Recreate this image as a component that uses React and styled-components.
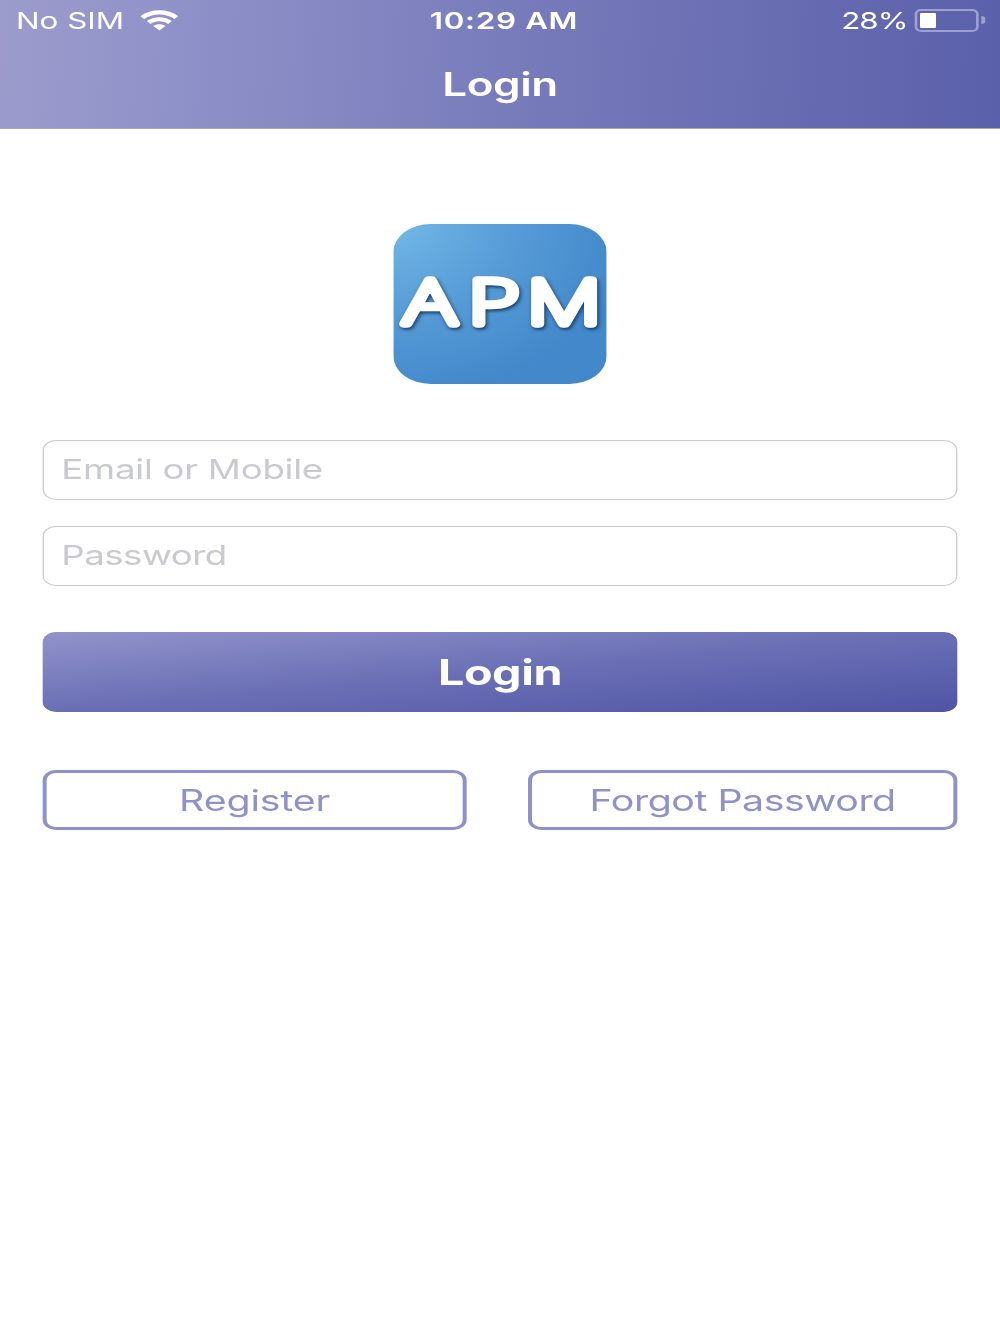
import React from "react"
import styled, { createGlobalStyle } from "styled-components"

const App = () => (
  <>
    <GlobalStyle />
    <Screen>
      <Header>
        <StatusBar>
          <Carrier>
            <StatusText>No SIM</StatusText>
            <WifiIcon viewBox="0 0 29 21">
              <path d="M0.3 6.2 C8 -1.6 21 -1.6 28.7 6.2 L25.9 9 C19.6 2.9 9.4 2.9 3.1 9 Z" />
              <path d="M5.1 11.1 C10.2 6 18.8 6 23.9 11.1 L21.1 13.9 C17.4 10.4 11.6 10.4 7.9 13.9 Z" />
              <path d="M9.9 16 C12.5 13.7 16.5 13.7 19.1 16 L14.5 20.6 Z" />
            </WifiIcon>
          </Carrier>
          <Time>10:29 AM</Time>
          <Power>
            <StatusText $spacing="-0.8px">28%</StatusText>
            <Battery>
              <BatteryLevel />
            </Battery>
            <BatteryTip />
          </Power>
        </StatusBar>
        <Title>Login</Title>
      </Header>

      <Form onSubmit={e => e.preventDefault()}>
        <Logo viewBox="0 0 160 160">
          <defs>
            <radialGradient id="sky" cx="0" cy="0" r="1.1">
              <stop offset="0" stopColor="#72b8e6" />
              <stop offset="0.5" stopColor="#579cd7" />
              <stop offset="1" stopColor="#4288ca" />
            </radialGradient>
          </defs>
          <rect width="160" height="160" rx="28" fill="url(#sky)" />
          <LogoText x="8 53.4 94.9" y="100.2" transform="scale(1.06 1)">APM</LogoText>
        </Logo>
        <Input type="text" placeholder="Email or Mobile" $spacing="-0.2px" />
        <Input type="password" placeholder="Password" $spacing="-0.4px" />
        <LoginButton>Login</LoginButton>
        <Links>
          <LinkButton type="button" $width="318px">Register</LinkButton>
          <LinkButton type="button" $width="322px" $spacing="-0.35px">Forgot Password</LinkButton>
        </Links>
      </Form>
    </Screen>
  </>
)

export default App

const GlobalStyle = createGlobalStyle`
  * {
    box-sizing: border-box;
  }
  body {
    margin: 0;
    background: #fff;
    overflow: hidden;
    font-family: Inter, "Liberation Sans", sans-serif;
  }
`

// 750px wide layout, stretched to fill the 4:3 window
const Screen = styled.div`
  width: 750px;
  height: 1334px;
  transform: scaleX(1.33333);
  transform-origin: 0 0;
  background: #fff;
`

const Header = styled.header`
  height: 129px;
  border-bottom: 1px solid #aaaab4;
  background: linear-gradient(92deg, #9c9bcc 0%, #8e91c8 19%, #7477b8 58%, #5a60aa 100%);
  color: #fff;
`

const StatusBar = styled.div`
  display: grid;
  grid-template-columns: 1fr auto 1fr;
  align-items: center;
  height: 40px;
  padding: 0 11px 0 12px;
`

const Carrier = styled.div`
  display: flex;
  align-items: center;
  gap: 12px;
`

const Power = styled.div`
  display: flex;
  align-items: center;
  justify-content: flex-end;
`

const StatusText = styled.span`
  padding-top: 2px;
  font-size: 23.5px;
  letter-spacing: ${props => props.$spacing || "0"};
  line-height: 38px;
  white-space: nowrap;
`

const Time = styled(StatusText)`
  padding-left: 5px;
  font-weight: 600;
  letter-spacing: 0.5px;
`

const WifiIcon = styled.svg`
  width: 29px;
  height: 21px;
  margin-left: -0.5px;
  fill: #fff;
`

const Battery = styled.div`
  width: 48px;
  height: 23px;
  margin-left: 5.5px;
  padding: 2px;
  border: 2px solid rgba(255, 255, 255, 0.4);
  border-radius: 5px;
`

const BatteryLevel = styled.div`
  width: 12px;
  height: 15px;
  border-radius: 1px;
  background: #fff;
`

const BatteryTip = styled.div`
  width: 3px;
  height: 8px;
  margin-left: 2px;
  border-radius: 0 4px 4px 0;
  background: rgba(255, 255, 255, 0.4);
`

const Title = styled.h1`
  margin: 0;
  font-size: 33px;
  font-weight: 600;
  letter-spacing: -0.3px;
  line-height: 88px;
  text-align: center;
`

const Form = styled.form`
  display: flex;
  flex-direction: column;
  padding: 95px 32px 0;
`

const Logo = styled.svg`
  align-self: center;
  width: 160px;
  height: 160px;
  margin-bottom: 56px;
`

// thin letters with a heavy round stroke give the soft ends
const LogoText = styled.text`
  font-family: "Noto Sans", Inter, sans-serif;
  font-size: 62px;
  font-weight: 100;
  fill: #fff;
  stroke: #fff;
  stroke-width: 7.6px;
  stroke-linejoin: round;
  filter: drop-shadow(1px 2px 1.5px rgba(10, 40, 80, 0.8));
`

const Input = styled.input`
  height: 60px;
  margin: 0 0 26px;
  padding: 0 13px 2px;
  border: 1px solid #cccccf;
  border-radius: 10px;
  background: #fff;
  font-family: inherit;
  font-size: 27.5px;
  letter-spacing: ${props => props.$spacing};
  outline: none;
  &::placeholder {
    color: #c9c9d0;
    opacity: 1;
  }
`

const LoginButton = styled.button`
  height: 80px;
  margin: 20px 0 58px;
  padding: 0;
  border: 0;
  border-radius: 10px;
  background: linear-gradient(to bottom right, #9293ca, #6a6fb5 50%, #4f55a4);
  color: #fff;
  font-family: inherit;
  font-size: 35px;
  font-weight: 700;
  letter-spacing: -0.3px;
`

const Links = styled.div`
  display: flex;
  justify-content: space-between;
`

const LinkButton = styled.button`
  width: ${props => props.$width};
  height: 60px;
  padding: 0;
  border: 3px solid #8f92ca;
  border-radius: 10px;
  background: #fff;
  color: #8f92ca;
  font-family: inherit;
  font-size: 29.5px;
  letter-spacing: ${props => props.$spacing || "-0.1px"};
`
